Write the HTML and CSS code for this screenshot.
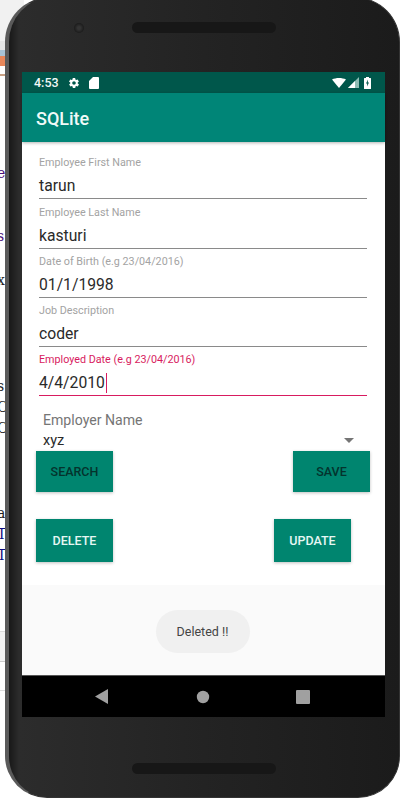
FILE: index.html
```html
<!DOCTYPE html>
<html lang="en">
<head>
  <meta charset="UTF-8">
  <title>SQLite</title>
  <link rel="stylesheet" href="styles.css">
</head>
<body>

  <!-- Bits of the desktop window behind the emulator -->
  <div class="backdrop">
    <div class="tab"></div>
    <div class="band"></div>
    <span class="sliver purple" style="top:166px">e</span>
    <span class="sliver purple" style="top:229px">s</span>
    <span class="sliver" style="top:273px">x</span>
    <span class="sliver" style="top:379px">s</span>
    <span class="sliver" style="top:400px">O</span>
    <span class="sliver" style="top:421px">O</span>
    <span class="sliver" style="top:506px">a</span>
    <span class="sliver navy" style="top:527px">T</span>
    <span class="sliver navy" style="top:548px">T</span>
  </div>

  <div class="phone">
    <div class="camera"></div>
    <div class="bezel-top">
      <div class="speaker"></div>
    </div>

    <div class="screen">
      <div class="status-bar">
        <span class="clock">4:53</span>
        <svg class="icon" width="12" height="12" viewBox="0 0 24 24"><path fill="#fff" d="M19.400 13c.1-.3.1-.7.1-1s0-.7-.1-1l2.100-1.600c.2-.2.2-.4.1-.6l-2-3.500c-.1-.2-.4-.3-.6-.2l-2.500 1c-.5-.4-1.100-.7-1.700-1l-.4-2.700c0-.2-.2-.4-.5-.4h-4c-.3 0-.5.2-.5.4l-.4 2.700c-.6.3-1.200.6-1.700 1l-2.500-1c-.2-.1-.5 0-.6.2l-2 3.500c-.1.2-.1.4.1.6L4.600 11c-.1.3-.1.7-.1 1s0 .7.1 1l-2.100 1.600c-.2.2-.2.4-.1.6l2 3.500c.1.2.4.3.6.2l2.500-1c.5.4 1.100.7 1.700 1l.4 2.700c0 .2.2.4.5.4h4c.3 0 .5-.2.5-.4l.4-2.700c.6-.3 1.200-.6 1.700-1l2.500 1c.2.1.5 0 .6-.2l2-3.500c.1-.2.1-.4-.1-.6L19.400 13zM12 15.500c-1.900 0-3.500-1.600-3.500-3.500s1.600-3.500 3.500-3.500 3.500 1.600 3.500 3.500-1.600 3.500-3.500 3.500z"/></svg>
        <svg class="icon" width="10" height="12" viewBox="0 0 10 12"><path fill="#fff" d="M4 0h5a1 1 0 0 1 1 1v10a1 1 0 0 1-1 1H1a1 1 0 0 1-1-1V4z"/></svg>
        <span class="status-right">
          <svg width="14" height="10" viewBox="0 0 14 10"><path fill="#fff" d="M0 1.500C2 .5 4.500 0 7 0s5 .5 7 1.500L7 10z"/></svg>
          <svg width="11" height="11" viewBox="0 0 11 11"><path fill="#8fbdb5" d="M11 0v11H0z"/><path fill="#fff" d="M7 4v7H0z"/></svg>
          <svg class="battery" width="7" height="12" viewBox="0 0 7 12"><path fill="#fff" d="M2 0h3v1h1.500a.5.5 0 0 1 .5.500V11.500a.5.5 0 0 1-.5.5H.5a.5.5 0 0 1-.5-.5V1.500A.5.5 0 0 1 .5 1H2z"/><path fill="#00574b" d="M4 2.500 2 6.500h1.200L3 9.500l2-4H3.800z"/></svg>
        </span>
      </div>

      <div class="app-bar">SQLite</div>

      <div class="content">
        <div class="form">
          <div class="field">
            <label>Employee First Name</label>
            <div class="value">tarun</div>
          </div>
          <div class="field">
            <label>Employee Last Name</label>
            <div class="value">kasturi</div>
          </div>
          <div class="field">
            <label>Date of Birth (e.g 23/04/2016)</label>
            <div class="value">01/1/1998</div>
          </div>
          <div class="field">
            <label>Job Description</label>
            <div class="value">coder</div>
          </div>
          <div class="field focused">
            <label>Employed Date (e.g 23/04/2016)</label>
            <div class="value">4/4/2010<span class="caret"></span></div>
          </div>
        </div>

        <div class="spinner">
          <div class="spinner-label">Employer Name</div>
          <div class="spinner-row">
            <span>xyz</span>
            <span class="arrow"></span>
          </div>
        </div>

        <div class="btn-row first">
          <button class="btn dark">SEARCH</button>
          <button class="btn dark">SAVE</button>
        </div>
        <div class="btn-row second">
          <button class="btn light">DELETE</button>
          <button class="btn light">UPDATE</button>
        </div>
      </div>

      <div class="toast-area">
        <div class="toast">Deleted !!</div>
      </div>

      <div class="nav-bar">
        <svg width="14" height="16" viewBox="0 0 14 16"><path fill="#a0a0a0" d="M13 0v15L0 7.500z"/></svg>
        <svg width="14" height="14" viewBox="0 0 14 14"><circle fill="#a0a0a0" cx="7" cy="7" r="6.200"/></svg>
        <svg width="14" height="14" viewBox="0 0 14 14"><rect fill="#a0a0a0" width="14" height="14" rx="1"/></svg>
      </div>
    </div>

    <div class="bezel-bottom">
      <div class="speaker"></div>
    </div>
  </div>

</body>
</html>
```

FILE: styles.css
```css
/* Page */
body {
  margin: 0;
  height: 799px;
  overflow: hidden;
  background: #fff;
  font-family: Roboto, sans-serif;
}

/* Desktop window behind the phone */
.backdrop .tab {
  position: absolute;
  left: 0;
  top: 0;
  width: 24px;
  height: 76px;
  background: linear-gradient(#f1f1f1 0 41px, #e6e6e6 41px 50px, #a9c3d6 50px 56px, #e8875a 56px 66px, #fff 66px 74px, #c9a184 74px);
}
.backdrop .band {
  position: absolute;
  left: 0;
  top: 631px;
  width: 10px;
  height: 60px;
  box-sizing: border-box;
  border-top: 1px solid #ddd;
  border-bottom: 1px solid #ddd;
  background: linear-gradient(#f3f3f3 0 29px, #ccc 29px 30px, #fff 30px);
}
.sliver {
  position: absolute;
  left: -3px;
  font: 14px/14px "DejaVu Serif", serif;
  color: #222;
}
.sliver.purple { color: #4b0f7a; }
.sliver.navy { color: #0a0a80; }

/* Phone body */
.phone {
  position: relative;
  box-sizing: border-box;
  width: 395px;
  height: 801px;
  margin: -3px 0 0 5px;
  padding-left: 5px;
  border-radius: 45px 45px 42px 42px;
  border: 1px solid #333;
  border-left: 4px solid #5a5a5a;
  background: linear-gradient(90deg, #181818 0, #2c2c2c 10px, #232323 50%, #1b1b1b 100%);
  display: flex;
  flex-direction: column;
}

.bezel-top {
  width: 363px;
  height: 74px;
  margin-left: 8px;
  box-sizing: border-box;
  padding-bottom: 16px;
  display: flex;
  justify-content: center;
  align-items: center;
}
.speaker {
  width: 144px;
  height: 11px;
  border-radius: 6px;
  background: #171717;
  background-image: radial-gradient(#292929 30%, transparent 40%);
  background-size: 2px 2px;
}
.camera {
  position: absolute;
  left: 65px;
  top: 25px;
  width: 10px;
  height: 10px;
  border-radius: 50%;
  background: radial-gradient(#343434 20%, #1b1b1b 70%);
}
.bezel-bottom {
  flex: 1;
  width: 363px;
  margin-left: 8px;
  box-sizing: border-box;
  padding-top: 22px;
  display: flex;
  justify-content: center;
  align-items: center;
}

/* Screen */
.screen {
  width: 363px;
  height: 645px;
  margin-left: 8px;
  display: flex;
  flex-direction: column;
  background: #fff;
}

.status-bar {
  height: 21px;
  flex: none;
  background: #00574b;
  color: #f2f8f7;
  display: flex;
  align-items: center;
  padding: 0 14px 0 12px;
  font-size: 12.5px;
  font-weight: 500;
}
.clock { margin-right: 9px; }
.status-bar .icon { margin-right: 9px; }
.status-right {
  margin-left: auto;
  display: flex;
  align-items: center;
  gap: 2px;
}
.battery { margin-left: 3px; }

.app-bar {
  height: 49px;
  flex: none;
  box-sizing: border-box;
  background: #008577;
  color: #f0faf8;
  font-size: 18px;
  font-weight: 500;
  line-height: 51px;
  padding-left: 14px;
  box-shadow: 0 1px 3px rgba(0,0,0,0.3);
}

.content {
  height: 443px;
  flex: none;
}

/* Inputs */
.form {
  padding: 8px 18px 0 17px;
}
.field {
  height: 49.3px;
  box-sizing: border-box;
  border-bottom: 1px solid #8a8a8a;
  display: flex;
  flex-direction: column;
  justify-content: flex-end;
}
.field label {
  font-size: 10.75px;
  line-height: 14px;
  color: #a3a3a3;
  margin-bottom: 5px;
}
.value {
  font-size: 15.7px;
  line-height: 22px;
  color: #2a2a2a;
  margin-bottom: 1px;
  display: flex;
  align-items: center;
}
.field.focused { border-bottom: 1.5px solid #d81b60; }
.field.focused label { color: #d81b60; }
.caret {
  width: 1.5px;
  height: 20px;
  background: #d81b60;
  margin-left: 1px;
}

/* Employer spinner */
.spinner {
  padding: 16px 31px 0 21px;
}
.spinner-label {
  font-size: 14.1px;
  line-height: 17px;
  color: #757575;
}
.spinner-row {
  display: flex;
  justify-content: space-between;
  align-items: center;
  font-size: 14.5px;
  line-height: 17px;
  height: 19px;
  margin-top: 2px;
  color: #2a2a2a;
}
.arrow {
  width: 0;
  height: 0;
  border-left: 5px solid transparent;
  border-right: 5px solid transparent;
  border-top: 5px solid #757575;
}

/* Buttons */
.btn-row {
  display: flex;
  justify-content: space-between;
  padding-left: 14px;
}
.btn-row.first {
  padding-right: 15px;
  margin-top: 1px;
}
.btn-row.second {
  padding-right: 34px;
  margin-top: 27px;
}
.btn {
  width: 77px;
  height: 41px;
  border: none;
  border-radius: 0;
  padding: 0;
  background: #00856f;
  font: 500 12.5px Roboto, sans-serif;
  box-shadow: 0 1px 3px rgba(0,0,0,0.25);
}
.btn-row.second .btn { height: 43px; }
.btn.dark { color: #04332d; }
.btn.light { color: #e6f7f4; }

/* Toast */
.toast-area {
  flex: none;
  height: 90px;
  box-sizing: border-box;
  background: #fafafa;
  padding: 25px 2px 0 0;
  display: flex;
  justify-content: center;
  align-items: flex-start;
}
.toast {
  width: 94px;
  height: 43px;
  border-radius: 22px;
  background: #f0f0f0;
  color: #444;
  font-size: 12.5px;
  line-height: 43px;
  text-align: center;
}

/* Android nav bar */
.nav-bar {
  height: 42px;
  flex: none;
  background: #000;
  border-top: 1px solid #555;
  box-sizing: border-box;
  padding-right: 2px;
  display: flex;
  justify-content: center;
  align-items: center;
  gap: 86.5px;
}
```
